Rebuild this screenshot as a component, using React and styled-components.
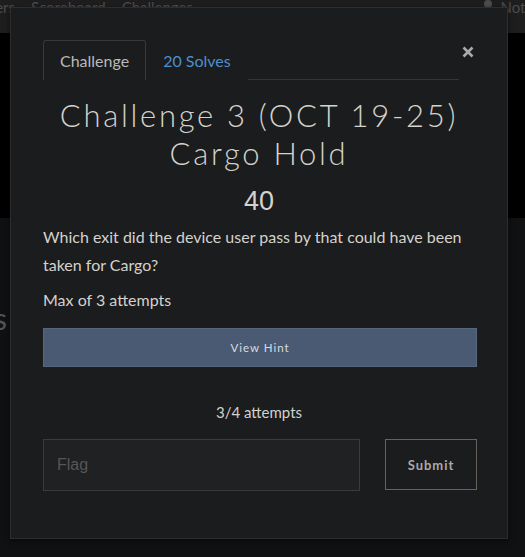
import React from "react";
import styled, { createGlobalStyle } from "styled-components";

const Global = createGlobalStyle`
  html, body { margin: 0; padding: 0; background: #0f1012; }
  body { width: 525px; height: 557px; overflow: hidden; font-family: Lato, "Open Sans", sans-serif; }
`;

const Page = styled.div`
  position: relative;
  width: 525px;
  height: 557px;
  display: flex;
  flex-direction: column;
  background: #101113;
  overflow: hidden;
`;

const NavBar = styled.div`
  height: 33px;
  background: #1e1e1f;
  display: flex;
  align-items: flex-start;
  color: #4c4c4c;
  font-size: 15px;
  white-space: nowrap;
`;

const NavLinks = styled.div`
  display: flex;
  gap: 16px;
  margin-left: -22px;
  margin-top: -2px;
  flex: 1;
`;

const NavUser = styled.div`
  display: flex;
  gap: 6px;
  align-items: center;
  margin-top: -2px;
  margin-right: -60px;
`;

const Hero = styled.div`
  height: 185px;
  background: #000;
`;

const Lower = styled.div`
  flex: 1;
  background: #101113;
  padding-top: 82px;
  margin-left: -6px;
  color: #545454;
  font-size: 30px;
  font-family: Lato, sans-serif;
`;

const Modal = styled.div`
  position: absolute;
  left: 10px;
  top: 7px;
  width: 498px;
  height: 532px;
  box-sizing: border-box;
  background: #1b1c1e;
  border: 1px solid #2c2d2f;
  padding: 32px 32px 0 32px;
  display: flex;
  flex-direction: column;
  box-shadow: 0 2px 6px rgba(0, 0, 0, 0.5);
`;

const Header = styled.div`
  display: flex;
  align-items: flex-start;
`;

const Tabs = styled.div`
  display: flex;
  width: 419px;
  border-bottom: 1px solid #333436;
`;

const Tab = styled.div`
  height: 40px;
  box-sizing: border-box;
  padding: 0 16px;
  display: flex;
  align-items: center;
  font-size: 16px;
  color: ${(p) => (p.$active ? "#b9b9b9" : "#4d8fcc")};
  border: 1px solid ${(p) => (p.$active ? "#39393b" : "transparent")};
  border-bottom: none;
  border-radius: 3px 3px 0 0;
  margin-bottom: -1px;
  background: #1b1c1e;
`;

const Close = styled.div`
  margin-left: 2px;
  margin-top: 6px;
  width: 14px;
  display: flex;
  justify-content: center;
`;

const Title = styled.h2`
  margin: 16px 0 0;
  text-align: center;
  font-family: Lato, sans-serif;
  font-weight: 300;
  font-size: 31px;
  letter-spacing: 2.7px;
  line-height: 38px;
  color: #d4d2cc;
`;

const Points = styled.div`
  text-align: center;
  font-family: "Liberation Sans", Arial, sans-serif;
  font-size: 27px;
  line-height: 32px;
  margin-top: 13px;
  color: #d4d2cc;
`;

const Description = styled.p`
  margin: 6px 0 0;
  font-size: 16px;
  line-height: 28px;
  color: #d4d2cc;
`;

const MaxAttempts = styled.p`
  margin: 9px 0 0;
  font-size: 16px;
  line-height: 24px;
  color: #d4d2cc;
`;

const HintButton = styled.button`
  margin-top: 16px;
  width: 434px;
  height: 39px;
  background: #4a5a72;
  border: 1px solid #56667e;
  color: #d8dce2;
  font-family: Lato, sans-serif;
  font-size: 11.5px;
  letter-spacing: 1px;
  cursor: pointer;
`;

const Attempts = styled.div`
  margin-top: 35px;
  text-align: center;
  font-size: 15px;
  line-height: 20px;
  color: #d4d2cc;
`;

const SubmitRow = styled.div`
  display: flex;
  justify-content: space-between;
  margin-top: 17px;
  width: 434px;
`;

const FlagInput = styled.input`
  width: 317px;
  height: 52px;
  box-sizing: border-box;
  background: #1f2123;
  border: 1px solid #393b3d;
  padding: 0 13px;
  font-family: "Liberation Sans", Arial, sans-serif;
  font-size: 16px;
  color: #ccc;
  outline: none;
  &::placeholder { color: #565656; }
`;

const SubmitButton = styled.button`
  width: 92px;
  height: 51px;
  background: transparent;
  border: 1px solid #66635c;
  color: #a9a9a9;
  font-family: Lato, sans-serif;
  font-weight: 700;
  font-size: 13px;
  letter-spacing: 1px;
`;

export default function App() {
  return (
    <>
      <Global />
      <Page>
        <NavBar>
          <NavLinks>
            <span>Users</span>
            <span>Scoreboard</span>
            <span>Challenges</span>
          </NavLinks>
          <NavUser>
            <svg width="12" height="14" viewBox="0 0 12 14">
              <circle cx="6" cy="4" r="4" fill="#4c4c4c" />
            </svg>
            <span>Notifications</span>
          </NavUser>
        </NavBar>
        <Hero />
        <Lower>s</Lower>
        <Modal>
          <Header>
            <Tabs>
              <Tab $active>Challenge</Tab>
              <Tab>20 Solves</Tab>
            </Tabs>
            <Close>
              <svg width="12" height="12" viewBox="0 0 12 12">
                <path d="M1.5 1.5 L10.5 10.5 M10.5 1.5 L1.5 10.5" stroke="#aaa" strokeWidth="2.6" />
              </svg>
            </Close>
          </Header>
          <Title>
            Challenge 3 (OCT 19-25)
            <br />
            Cargo Hold
          </Title>
          <Points>40</Points>
          <Description>
            Which exit did the device user pass by that could have been taken for Cargo?
          </Description>
          <MaxAttempts>Max of 3 attempts</MaxAttempts>
          <HintButton>View Hint</HintButton>
          <Attempts>3/4 attempts</Attempts>
          <SubmitRow>
            <FlagInput placeholder="Flag" />
            <SubmitButton>Submit</SubmitButton>
          </SubmitRow>
        </Modal>
      </Page>
    </>
  );
}
